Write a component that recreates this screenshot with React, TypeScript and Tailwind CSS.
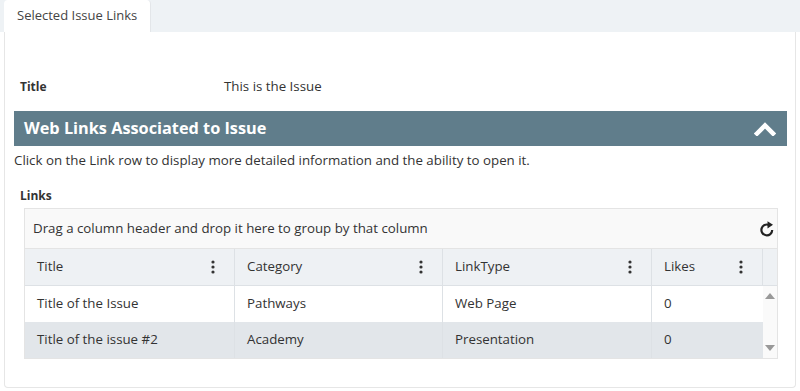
import React from "react";

const font = { fontFamily: '"Segoe UI", "Open Sans", "Noto Sans", sans-serif' };

function Kebab() {
  return (
    <svg width="4" height="14" viewBox="0 0 4 14" className="shrink-0">
      <circle cx="2" cy="2" r="1.6" fill="#333" />
      <circle cx="2" cy="7" r="1.6" fill="#333" />
      <circle cx="2" cy="12" r="1.6" fill="#333" />
    </svg>
  );
}

function HeaderCell({ label, w }: { label: string; w: string }) {
  return (
    <div className={`${w} h-full flex items-center justify-between pl-[12px] pr-[19px] border-r border-[#dde1e5]`}>
      <span>{label}</span>
      <Kebab />
    </div>
  );
}

export default function App() {
  const cols = ["w-[210px]", "w-[208px]", "w-[209px]", "w-[111px]"];
  const rows = [
    ["Title of the Issue", "Pathways", "Web Page", "0"],
    ["Title of the issue #2", "Academy", "Presentation", "0"],
  ];
  return (
    <div className="w-[800px] h-[391px] bg-white overflow-hidden text-[#333]" style={font}>
      <div className="h-[32px] bg-[#eef2f5] flex pl-[4px]">
        <div className="w-[147px] h-full bg-white rounded-t-[4px] flex items-center pl-[13px] text-[13px] text-[#444] border-r border-[#e3e6e9]">
          Selected Issue Links
        </div>
      </div>
      <div className="mx-[4px] h-[356px] border border-t-0 border-[#e6e6e6] rounded-b-[4px] flex flex-col">
        <div className="flex items-center mt-[46px] h-[18px]">
          <div className="w-[219px] pl-[15px] text-[12px] font-bold text-[#333]">Title</div>
          <div className="text-[13.3px] text-[#333]">This is the Issue</div>
        </div>
        <div className="mt-[15px] ml-[9px] mr-[8px] h-[35px] bg-[#607d8b] flex items-center justify-between pl-[10px] pr-[11px]">
          <span className="text-white font-bold text-[16.3px]">Web Links Associated to Issue</span>
          <svg width="22" height="14" viewBox="0 0 22 14">
            <polyline points="3,11.5 11,3.5 19,11.5" fill="none" stroke="white" strokeWidth="4.5" strokeLinejoin="miter" strokeLinecap="square" />
          </svg>
        </div>
        <div className="ml-[9px] mt-[5px] text-[13.3px] h-[20px] flex items-center text-[#333]">
          Click on the Link row to display more detailed information and the ability to open it.
        </div>
        <div className="ml-[15px] mt-[17px] text-[12px] font-bold h-[16px] flex items-center">Links</div>
        <div className="ml-[19px] mt-[4px] w-[754px] border border-[#e4e4e4] text-[13.3px]">
          <div className="h-[40px] bg-[#f9f9f9] flex items-center justify-between pl-[8px] pr-[2px] border-b border-[#e4e4e4]">
            <span>Drag a column header and drop it here to group by that column</span>
            <svg width="16" height="18" viewBox="0 0 16 18">
              <path d="M13.2 10A5.4 5.4 0 1 1 10 5" fill="none" stroke="#222" strokeWidth="2.2" />
              <polygon points="8.5,1.2 14,4.8 8.5,8.5" fill="#222" />
            </svg>
          </div>
          <div className="h-[37px] bg-[#eef1f4] flex border-b border-[#dde1e5]">
            {["Title", "Category", "LinkType", "Likes"].map((l, i) => (
              <HeaderCell key={l} label={l} w={cols[i]} />
            ))}
            <div className="flex-1" />
          </div>
          <div className="flex">
            <div className="flex flex-col">
              {rows.map((r, ri) => (
                <div key={ri} className={`flex h-[36px] ${ri === 1 ? "bg-[#e2e6ea]" : "bg-white"}`}>
                  {r.map((c, ci) => (
                    <div key={ci} className={`${cols[ci]} flex items-center pl-[12px] ${ci < 3 ? "border-r border-[#dde1e5]" : ""}`}>
                      {c}
                    </div>
                  ))}
                </div>
              ))}
            </div>
            <div className="flex-1 bg-[#fafafa] flex flex-col items-center justify-between py-[7px]">
              <svg width="10" height="6" viewBox="0 0 10 6"><polygon points="0,6 5,0 10,6" fill="#999" /></svg>
              <svg width="10" height="6" viewBox="0 0 10 6"><polygon points="0,0 5,6 10,0" fill="#999" /></svg>
            </div>
          </div>
        </div>
      </div>
    </div>
  );
}
